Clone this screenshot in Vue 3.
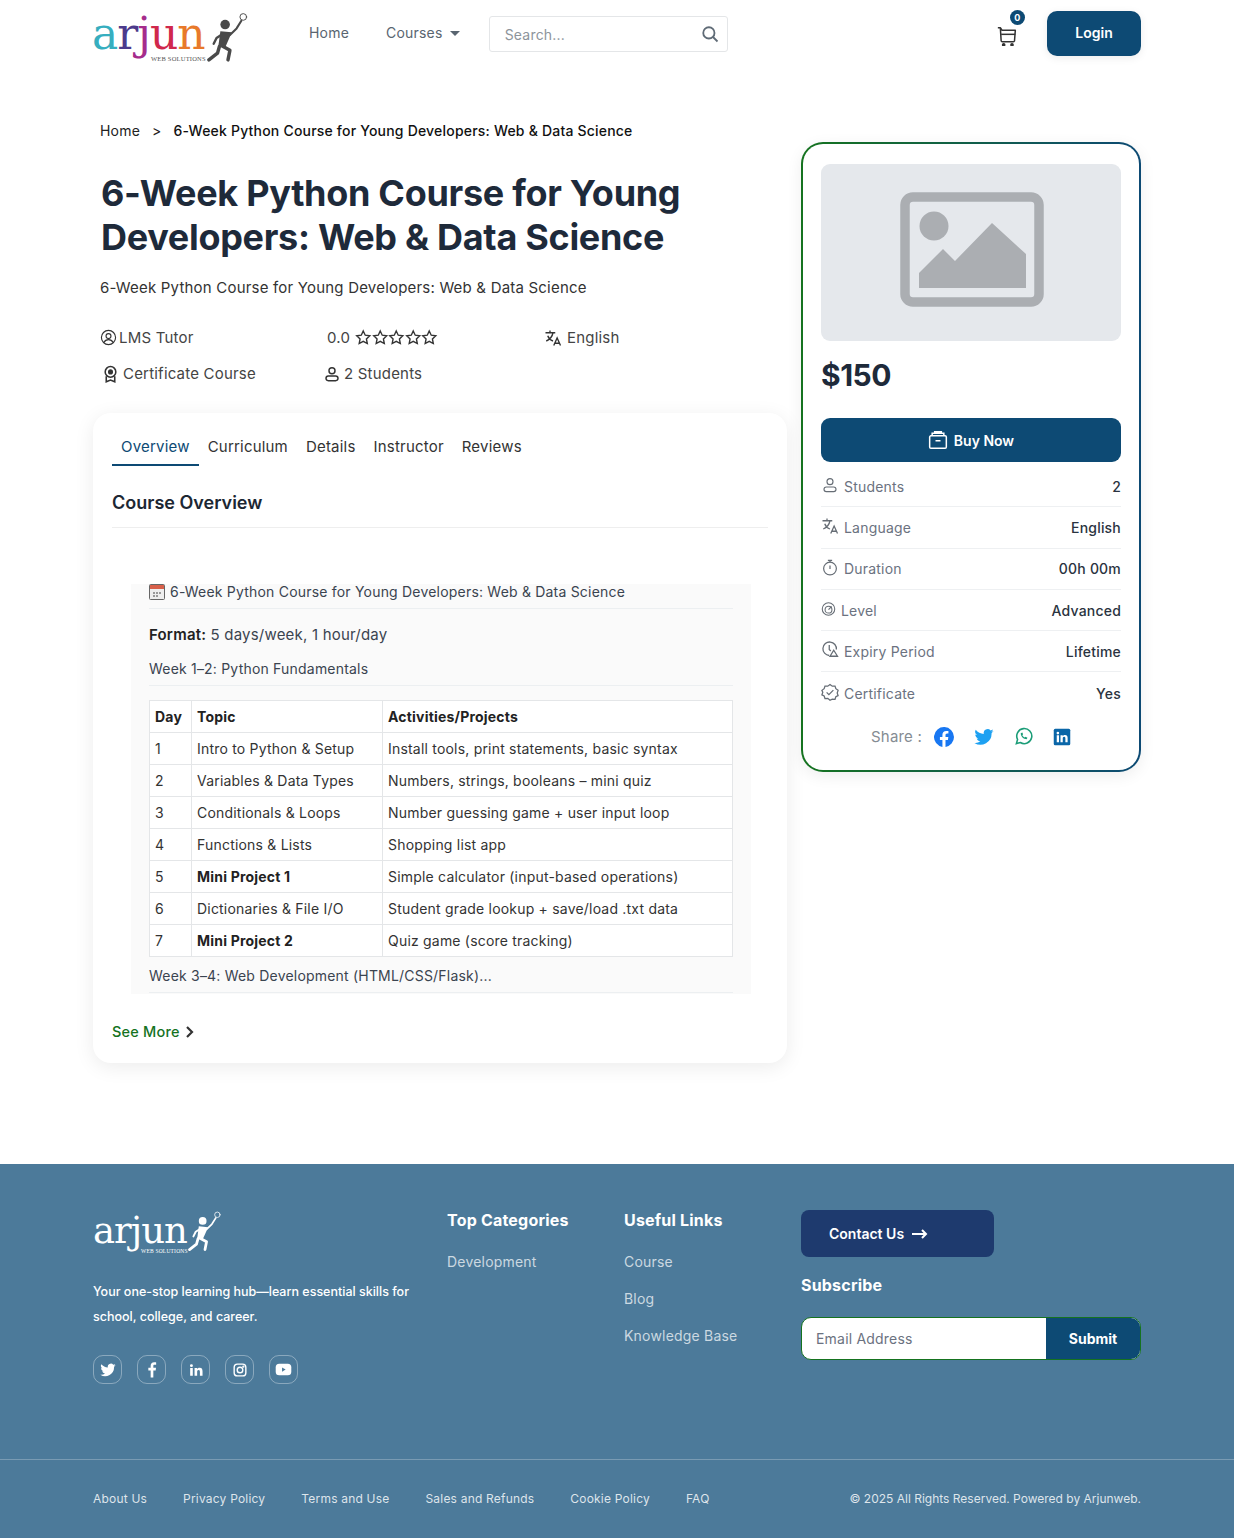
<template>
  <div class="page">
    <header class="topbar">
      <div class="logo">
        <span class="logo-word"><i class="c1">a</i><i class="c2">r</i><i class="c3">j</i><i class="c4">u</i><i class="c5">n</i></span>
        <span class="logo-sub">WEB SOLUTIONS</span>
        <svg class="logo-man" viewBox="0 0 44 52"><g fill="none" stroke="#4a4a4a" stroke-linecap="round" stroke-linejoin="round"><circle cx="38" cy="5" r="3.5" stroke-width="1"/><path d="M36 9 31 17 24 24" stroke-width="2.2"/><path d="M16 23 10 27 7 33" stroke-width="2.5"/><path d="M15 35 24 40 22 50" stroke-width="3.6"/><path d="M13 36 11 43 2 50" stroke-width="3.6"/></g><circle cx="19" cy="13" r="5" fill="#4a4a4a"/><path d="M14 20 26 21 19 37 12 35Z" fill="#4a4a4a"/></svg>
      </div>
      <nav class="nav">
        <a>Home</a>
        <a>Courses <span class="caret"></span></a>
      </nav>
      <div class="search">
        <span>Search...</span>
        <svg width="18" height="18" viewBox="0 0 24 24" fill="none" stroke="#5f6b76" stroke-width="2.4"><circle cx="10.5" cy="10.5" r="7.5"/><path d="M16 16l6 6"/></svg>
      </div>
      <div class="top-right">
        <div class="cart">
          <svg width="20" height="20" viewBox="0 0 24 24" fill="none" stroke="#333" stroke-width="1.8" stroke-linejoin="round"><path d="M1 2h3l2 3h16l-1 13a2 2 0 0 1-2 1H7a2 2 0 0 1-2-1L4 2"/><path d="M5 10h17"/><circle cx="8" cy="22.500" r="1.300" fill="#333"/><circle cx="18" cy="22.500" r="1.300" fill="#333"/></svg>
          <span class="badge">0</span>
        </div>
        <button class="login">Login</button>
      </div>
    </header>

    <main class="main">
      <div class="left">
        <div class="crumb"><span>Home</span><span class="sep">&gt;</span><b>6-Week Python Course for Young Developers: Web &amp; Data Science</b></div>
        <h1>6-Week Python Course for Young Developers: Web &amp; Data Science</h1>
        <p class="sub">6-Week Python Course for Young Developers: Web &amp; Data Science</p>
        <div class="meta">
          <div class="m"><svg width="17" height="17" viewBox="0 0 24 24" fill="none" stroke="#333" stroke-width="1.6"><circle cx="12" cy="12" r="10"/><circle cx="12" cy="10" r="3.5"/><path d="M5.5 19c1.5-3 3.5-4 6.5-4s5 1 6.5 4"/></svg>LMS Tutor</div>
          <div class="m rate">0.0
            <span class="stars"><svg v-for="n in 5" :key="n" width="16.500" height="17" viewBox="0 0 24 24" fill="none" stroke="#333" stroke-width="2"><path d="M12 2.500l2.900 6.200 6.600.8-4.900 4.600 1.300 6.700L12 17.500l-5.900 3.300 1.300-6.700L2.500 9.500l6.600-.8z"/></svg></span>
          </div>
          <div class="m lang"><svg width="18" height="18" viewBox="0 0 24 24" fill="none" stroke="#333" stroke-width="1.8"><path d="M2 5h13M8 2v3M12 5c-1 5-4 9-9 11M5 9c1 3 4 6 7 7"/><path d="M13 22l4.500-10L22 22M14.500 19h6"/></svg>English</div>
          <div class="m cert"><svg width="17" height="18" viewBox="0 0 24 24" fill="none" stroke="#333" stroke-width="2.200"><circle cx="12" cy="9" r="7.500"/><circle cx="12" cy="9" r="2.500" fill="#333"/><path d="M6 15v8l6-2.500L18 23v-8"/></svg>Certificate Course</div>
          <div class="m stu"><svg width="16" height="16" viewBox="0 0 24 24" fill="none" stroke="#333" stroke-width="2.200"><circle cx="12" cy="7" r="4.500"/><rect x="3" y="15" width="18" height="7" rx="3.500"/></svg>2 Students</div>
        </div>

        <section class="card">
          <div class="tabs">
            <a v-for="(t, i) in tabs" :key="t" :class="{ on: i === 0 }">{{ t }}</a>
          </div>
          <h2 class="ov">Course Overview</h2>
          <div class="rich">
            <div class="hline first"><svg class="cal" width="16" height="16" viewBox="0 0 16 16"><rect x=".5" y=".5" width="15" height="15" rx="1" fill="#eee" stroke="#666"/><rect x="1" y="1" width="14" height="4" fill="#d8604a"/><path d="M4 8h2v2H4zM7 8h2v2H7zM10 8h2v2h-2zM4 11h2v2H4zM7 11h2v2H7z" fill="#999"/></svg> 6-Week Python Course for Young Developers: Web &amp; Data Science</div>
            <p class="format"><b>Format:</b> 5 days/week, 1 hour/day</p>
            <div class="hline w">Week 1–2: Python Fundamentals</div>
            <table>
              <thead><tr><th class="c-day">Day</th><th class="c-topic">Topic</th><th>Activities/Projects</th></tr></thead>
              <tbody>
                <tr v-for="r in rows" :key="r[0]">
                  <td>{{ r[0] }}</td>
                  <td><b v-if="r[3]">{{ r[1] }}</b><template v-else>{{ r[1] }}</template></td>
                  <td>{{ r[2] }}</td>
                </tr>
              </tbody>
            </table>
            <div class="hline last">Week 3–4: Web Development (HTML/CSS/Flask)...</div>
          </div>
          <a class="more">See More <svg width="9" height="12" viewBox="0 0 9 12" fill="none" stroke="#333" stroke-width="2.200"><path d="M2 1l5 5-5 5"/></svg></a>
        </section>
      </div>

      <aside class="side">
        <div class="thumb">
          <svg width="146" height="116" viewBox="0 0 146 116"><rect x="5" y="5" width="134" height="105" rx="8" fill="none" stroke="#abaeb2" stroke-width="9.500"/><circle cx="34" cy="34" r="14.500" fill="#abaeb2"/><path d="M19 96V81l24-24 12 12 37-38 34 31v34z" fill="#abaeb2"/></svg>
        </div>
        <div class="price">$150</div>
        <button class="buy">
          <svg width="20" height="20" viewBox="0 0 24 24" fill="none" stroke="#fff" stroke-width="1.800"><rect x="2" y="7" width="20" height="15" rx="1.500"/><path d="M5 7V4h14v3M8 4V2h8v2M9 13h6"/></svg>
          Buy Now
        </button>
        <div class="facts">
          <div v-for="f in facts" :key="f.label" class="fact">
            <span class="fl">
              <svg :class="f.cls" :width="f.size" :height="f.size" viewBox="0 0 24 24" fill="none" stroke="#666d75" stroke-width="1.700" v-html="f.icon"></svg>
              {{ f.label }}
            </span>
            <span class="fv">{{ f.value }}</span>
          </div>
        </div>
        <div class="share">
          <span>Share :</span>
          <svg width="20" height="20" viewBox="0 0 24 24"><path fill="#1877f2" d="M24 12a12 12 0 1 0-13.900 11.900v-8.400h-3V12h3V9.400c0-3 1.800-4.700 4.500-4.700 1.300 0 2.700.2 2.700.2v3h-1.500c-1.500 0-2 .9-2 1.900V12h3.400l-.5 3.500h-2.900v8.400A12 12 0 0 0 24 12z"/></svg>
          <svg width="20" height="20" viewBox="0 0 24 24"><path fill="#1da1f2" :d="twitter"/></svg>
          <svg width="19" height="19" viewBox="0 0 24 24" fill="none" stroke="#1c9d78" stroke-width="2"><path d="M3 21l1.500-5.200A9.500 9.500 0 1 1 8 19.600z"/><path d="M8.500 8c0 4 3.500 7.500 7.500 7.500l1-2-2.500-1.200-1 1c-1.500-.7-2.500-1.700-3-3l1-1L10.500 7z" fill="#1c9d78" stroke="none"/></svg>
          <svg width="18" height="18" viewBox="0 0 24 24"><rect x="1" y="1" width="22" height="22" rx="2" fill="#0a66a8"/><path fill="#fff" d="M5 9.500h3V19H5zM6.500 5a1.700 1.700 0 1 1 0 3.500 1.700 1.700 0 0 1 0-3.500zM10 9.500h3v1.300c.5-.9 1.600-1.600 3-1.600 3 0 3.500 2 3.500 4.600V19h-3v-4.600c0-1.200 0-2.600-1.600-2.600S13 13 13 14.300V19h-3z"/></svg>
        </div>
      </aside>
    </main>

    <footer class="footer">
      <div class="f-top">
        <div class="f-about">
          <div class="logo f-logo">
            <span class="logo-word">arjun</span>
            <span class="logo-sub">WEB SOLUTIONS</span>
            <svg class="logo-man" viewBox="0 0 44 52"><g fill="none" stroke="#fff" stroke-linecap="round" stroke-linejoin="round"><circle cx="38" cy="5" r="3.500" stroke-width="1"/><path d="M36 9 31 17 24 24" stroke-width="2.200"/><path d="M16 23 10 27 7 33" stroke-width="2.500"/><path d="M15 35 24 40 22 50" stroke-width="3.600"/><path d="M13 36 11 43 2 50" stroke-width="3.600"/></g><circle cx="19" cy="13" r="5" fill="#fff"/><path d="M14 20 26 21 19 37 12 35Z" fill="#fff"/></svg>
          </div>
          <p class="f-text">Your one-stop learning hub—learn essential skills for school, college, and career.</p>
          <div class="socials">
            <a><svg width="16" height="16" viewBox="0 0 24 24"><path fill="#fff" :d="twitter"/></svg></a>
            <a><svg width="16" height="17" viewBox="0 0 24 24"><path fill="#fff" d="M14 24V13.500h3.500l.5-4h-4V7c0-1.200.4-2 2-2h2.200V1.400C17.800 1.300 16.500 1.200 15.200 1.200 12 1.200 10 3.100 10 6.600v2.900H6.500v4H10V24z"/></svg></a>
            <a><svg width="14" height="14" viewBox="0 0 24 24"><path fill="#fff" d="M2 8.500h4.500V22H2zM4.200 2a2.500 2.500 0 1 1 0 5 2.500 2.500 0 0 1 0-5zM9.500 8.500h4.300v1.900c.7-1.200 2.200-2.300 4.300-2.300 4.300 0 5.100 2.800 5.100 6.500V22h-4.500v-6.500c0-1.700 0-3.700-2.300-3.700s-2.400 1.800-2.400 3.600V22H9.500z"/></svg></a>
            <a><svg width="14" height="14" viewBox="0 0 24 24" fill="none" stroke="#fff" stroke-width="2.400"><rect x="2" y="2" width="20" height="20" rx="5.500"/><circle cx="12" cy="12" r="4.800"/><circle cx="17.800" cy="6.200" r=".8" fill="#fff"/></svg></a>
            <a><svg width="17" height="17" viewBox="0 0 24 24"><rect x="1" y="4" width="22" height="16" rx="5" fill="#fff"/><path d="M10 9l5 3-5 3z" fill="#4c7a9a"/></svg></a>
          </div>
        </div>
        <div class="f-col cat">
          <h4>Top Categories</h4>
          <a>Development</a>
        </div>
        <div class="f-col links">
          <h4>Useful Links</h4>
          <a>Course</a>
          <a>Blog</a>
          <a>Knowledge Base</a>
        </div>
        <div class="f-sub">
          <button class="contact">Contact Us
            <svg width="16" height="12" viewBox="0 0 16 12" fill="none" stroke="#fff" stroke-width="2"><path d="M0 6h14M10 2l4 4-4 4"/></svg>
          </button>
          <h4>Subscribe</h4>
          <div class="sub-form">
            <span>Email Address</span>
            <button>Submit</button>
          </div>
        </div>
      </div>
      <div class="f-bottom">
        <div class="f-inner">
          <div class="f-links"><a v-for="l in bottomLinks" :key="l">{{ l }}</a></div>
          <span class="copy">© 2025 All Rights Reserved. Powered by Arjunweb.</span>
        </div>
      </div>
    </footer>
  </div>
</template>

<script setup>
const tabs = ['Overview', 'Curriculum', 'Details', 'Instructor', 'Reviews']

const rows = [
  ['1', 'Intro to Python & Setup', 'Install tools, print statements, basic syntax'],
  ['2', 'Variables & Data Types', 'Numbers, strings, booleans – mini quiz'],
  ['3', 'Conditionals & Loops', 'Number guessing game + user input loop'],
  ['4', 'Functions & Lists', 'Shopping list app'],
  ['5', 'Mini Project 1', 'Simple calculator (input-based operations)', true],
  ['6', 'Dictionaries & File I/O', 'Student grade lookup + save/load .txt data'],
  ['7', 'Mini Project 2', 'Quiz game (score tracking)', true]
]

const facts = [
  { label: 'Students', value: '2', size: 16, cls: 'fi', icon: '<circle cx="12" cy="7" r="4.500"/><rect x="3" y="15" width="18" height="7" rx="3.500"/>' },
  { label: 'Language', value: 'English', size: 18, cls: 'fi', icon: '<path d="M2 5h13M8 2v3M12 5c-1 5-4 9-9 11M5 9c1 3 4 6 7 7"/><path d="M13 22l4.500-10L22 22M14.500 19h6"/>' },
  { label: 'Duration', value: '00h 00m', size: 17, cls: 'fi', icon: '<circle cx="12" cy="13.500" r="9"/><path d="M9 2h6M12 2v3M12 9v5"/>' },
  { label: 'Level', value: 'Advanced', size: 16, cls: 'fi tight', icon: '<circle cx="12" cy="12" r="10"/><circle cx="12" cy="13" r="5.500"/><path d="M12 13l5-5"/>' },
  { label: 'Expiry Period', value: 'Lifetime', size: 19, cls: 'fi', icon: '<path d="M11 20a9 9 0 1 1 9.500-8"/><path d="M11 6v6l2 2"/><path d="M17 13l5 8H12z"/>' },
  { label: 'Certificate', value: 'Yes', size: 18, cls: 'fi', icon: '<path d="M12 2l3 2.200 3.700-.1 1.100 3.500 3 2.200-1.200 3.500 1.200 3.500-3 1.600-1.100 3.300-3.700-.2L12 23l-3-2.500-3.700.2-1.100-3.300-3-1.600 1.200-3.500L1.200 9.800l3-2.200 1.100-3.500 3.700.1z"/><path d="M7.500 12.500l3 3 6-6"/>' }
]

const bottomLinks = ['About Us', 'Privacy Policy', 'Terms and Use', 'Sales and Refunds', 'Cookie Policy', 'FAQ']

const twitter = 'M23.500 4.900c-.8.400-1.800.600-2.700.700 1-.600 1.700-1.500 2.100-2.600-.9.500-1.900.900-3 1.100a4.700 4.700 0 0 0-8.100 4.300C7.900 8.200 4.400 6.300 2.100 3.400a4.700 4.700 0 0 0 1.500 6.300c-.8 0-1.500-.2-2.100-.6 0 2.300 1.600 4.200 3.800 4.700-.7.200-1.400.2-2.100.1.600 1.900 2.300 3.200 4.400 3.300A9.500 9.500 0 0 1 .5 19.100 13.400 13.400 0 0 0 21.100 7.200c.9-.7 1.800-1.400 2.400-2.300z'
</script>

<style scoped>
.page {
  width: 1234px;
  font-family: Inter, "Open Sans", sans-serif;
  letter-spacing: 0.2px;
  color: #222;
  background: #fff;
}

.topbar {
  height: 70px;
  padding: 0 93px;
  display: flex;
  align-items: flex-start;
  position: relative;
}

.logo {
  position: relative;
  width: 156px;
  height: 62px;
  margin-top: 8px;
  flex: none;
}
.logo-word {
  position: absolute;
  left: -1px;
  top: 3px;
  font-family: "DejaVu Serif", serif;
  font-size: 44px;
  letter-spacing: -1px;
  line-height: 46px;
}
.logo-word i { font-style: normal; }
.c1 { color: #36aebf; }
.c2 { color: #4c3a8c; }
.c3 { color: #a52c8c; }
.c4 { color: #d0284c; }
.c5 { color: #e8792a; }
.logo-sub {
  position: absolute;
  left: 58px;
  top: 47px;
  font-family: "Liberation Serif", serif;
  font-size: 6.500px;
  color: #555;
  white-space: nowrap;
}
.logo-man {
  position: absolute;
  left: 114px;
  top: 3px;
  width: 42px;
  height: 52px;
}

.nav {
  display: flex;
  gap: 37px;
  margin-left: 60px;
  margin-top: 25px;
  font-size: 14px;
  color: #596570;
  line-height: 16px;
}
.caret {
  display: inline-block;
  margin-left: 3px;
  vertical-align: 2px;
  border: 5px solid transparent;
  border-top: 5px solid #596570;
  border-bottom: 0;
}
.search {
  width: 239px;
  height: 36px;
  box-sizing: border-box;
  margin-left: 29px;
  margin-top: 16px;
  padding: 0 8px 0 15px;
  border: 1px solid #e4e6e8;
  border-radius: 3px;
  display: flex;
  align-items: center;
  justify-content: space-between;
  font-size: 14px;
  color: #8d949b;
}
.top-right {
  margin-left: auto;
  margin-top: 11px;
  display: flex;
  gap: 28px;
}
.cart {
  position: relative;
  margin-top: 15px;
  width: 22px;
}
.badge {
  position: absolute;
  top: -16px;
  left: 13px;
  width: 15px;
  height: 15px;
  border-radius: 50%;
  background: #0d4a74;
  color: #fff;
  font-size: 9px;
  font-weight: 700;
  text-align: center;
  line-height: 15px;
}
.login {
  width: 94px;
  height: 45px;
  padding-bottom: 3px;
  border: 0;
  border-radius: 10px;
  background: #0d4a74;
  color: #fff;
  font: 600 14px Inter, sans-serif;
  box-shadow: 0 2px 8px rgba(0, 0, 0, 0.08);
}

.main {
  padding: 0 93px;
  display: flex;
  gap: 14px;
  align-items: flex-start;
}
.left { width: 694px; flex: none; padding-top: 52px; }

.crumb {
  padding-left: 7px;
  font-size: 14px;
  line-height: 18px;
  display: flex;
  gap: 12px;
}
.crumb b { font-weight: 500; color: #111; }

h1 {
  margin: 31px 0 0 8px;
  font-size: 36px;
  line-height: 44px;
  font-weight: 700;
  color: #1e2a3a;
  letter-spacing: -0.3px;
  width: 620px;
}
.sub {
  margin: 19px 0 0 7px;
  font-size: 15px;
  line-height: 20px;
  color: #333;
}
.meta {
  margin: 29px 0 0 7px;
  display: grid;
  grid-template-columns: 224px 220px 1fr;
  row-gap: 15px;
  font-size: 15px;
  color: #444;
}
.m {
  display: flex;
  align-items: center;
  gap: 2px;
  height: 21px;
}
.rate { gap: 5px; margin-left: 3px; }
.stars { display: flex; gap: 0; }
.lang { gap: 5px; }
.cert { gap: 4px; margin-left: 2px; }
.stu { gap: 4px; }

.card {
  margin-top: 29px;
  height: 650px;
  box-sizing: border-box;
  background: #fff;
  border-radius: 18px;
  padding: 18px 18px 0 19px;
  box-shadow: 0 4px 20px rgba(0, 0, 0, 0.08);
}
.tabs {
  display: flex;
  font-size: 15px;
  color: #333;
}
.tabs a { padding: 6px 9px 8px; line-height: 19px; }
.tabs a.on {
  color: #0d4a74;
  border-bottom: 2px solid #0d4a74;
}
.ov {
  margin: 26px 0 0;
  padding-bottom: 13px;
  font-size: 18px;
  line-height: 22px;
  font-weight: 600;
  letter-spacing: 0;
  color: #1c2733;
  border-bottom: 1px solid #eee;
  width: 656px;
}
.rich {
  width: 620px;
  box-sizing: border-box;
  margin: 56px 0 0 19px;
  padding: 0 18px;
  height: 410px;
  background: #fafafa;
  color: #3a4450;
  overflow: hidden;
}
.hline {
  font-size: 14px;
  line-height: 18px;
  border-bottom: 1px solid #eceff1;
}
.first { margin-top: -1px; padding-bottom: 7px; display: flex; align-items: center; gap: 5px; white-space: nowrap; }
.cal { flex: none; }
.format {
  margin: 16px 0 0;
  font-size: 15px;
  line-height: 20px;
}
.format b { color: #222; font-weight: 600; }
.w { margin-top: 15px; padding-bottom: 7px; }
table {
  margin-top: 14px;
  width: 584px;
  border-collapse: collapse;
  background: #fff;
  font-size: 14px;
  line-height: 18px;
  table-layout: fixed;
  color: #333;
}
th, td {
  border: 1px solid #e4e6e8;
  padding: 0 4px 0 5px;
  height: 32px;
  box-sizing: border-box;
  text-align: left;
  white-space: nowrap;
}
th, td b { font-weight: 700; color: #222; }
.c-day { width: 42px; }
.c-topic { width: 191px; }
.last { margin-top: 10px; padding-bottom: 7px; }
.more {
  display: inline-flex;
  align-items: center;
  gap: 5px;
  margin-top: 29px;
  font-size: 14.500px;
  font-weight: 500;
  line-height: 18px;
  color: #15731f;
}

.side {
  margin-top: 72px;
  width: 340px;
  height: 630px;
  box-sizing: border-box;
  padding: 20px 18px 0;
  border: 2px solid transparent;
  border-radius: 22px;
  background: linear-gradient(#fff, #fff) padding-box, linear-gradient(90deg, #15731f, #0d4a74) border-box;
  box-shadow: 0 4px 16px rgba(0, 0, 0, 0.07);
}
.thumb {
  height: 177px;
  background: #e5e8ec;
  border-radius: 9px;
  display: flex;
  align-items: center;
  justify-content: center;
}
.thumb svg { margin: -6px 0 0 4px; }
.price {
  margin-top: 15px;
  font-size: 30px;
  line-height: 38px;
  font-weight: 700;
  letter-spacing: -0.5px;
  color: #1e2a3a;
}
.buy {
  margin-top: 24px;
  width: 100%;
  height: 44px;
  border: 0;
  border-radius: 9px;
  background: #0d4a74;
  color: #fff;
  font: 600 14px Inter, sans-serif;
  display: flex;
  align-items: center;
  justify-content: center;
  gap: 6px;
}
.facts { margin-top: 4px; }
.fact {
  height: 41.300px;
  box-sizing: border-box;
  display: flex;
  align-items: center;
  justify-content: space-between;
  border-bottom: 1px solid #eef0f2;
  font-size: 14px;
  color: #6b7280;
}
.fact:last-child { border-bottom: 0; }
.fl { display: flex; align-items: center; gap: 5px; }
.fl svg { margin-top: -3px; width: 18px; }
.fl svg.tight { width: 15px; }
.fv { font-weight: 500; color: #2a3340; }
.share {
  margin-top: 13px;
  display: flex;
  align-items: center;
  justify-content: center;
  gap: 20px;
  font-size: 15px;
  color: #858c93;
}
.share span { margin-right: -8px; }

.footer {
  margin-top: 101px;
  background: #4c7a9a;
  color: #fff;
  height: 374px;
}
.f-top {
  height: 295px;
  box-sizing: border-box;
  padding: 46px 93px 0;
  display: flex;
}
.f-about { width: 354px; flex: none; }
.f-logo { margin-top: 0; height: 62px; width: 130px; }
.f-logo .logo-word { color: #fff; top: -2px; font-size: 37px; left: 0; }
.f-logo .logo-sub { color: #fff; left: 48px; top: 38px; font-size: 5.500px; }
.f-logo .logo-man { left: 95px; top: -1px; width: 34px; height: 44px; }
.f-text {
  width: 322px;
  margin: 7px 0 0;
  font-size: 12.500px;
  line-height: 25px;
  font-weight: 500;
  letter-spacing: 0;
}
.socials { margin-top: 26px; display: flex; gap: 15px; }
.socials a {
  width: 29px;
  height: 29px;
  box-sizing: border-box;
  border: 1px solid rgba(255, 255, 255, 0.35);
  border-radius: 10px;
  display: flex;
  align-items: center;
  justify-content: center;
}
.f-col { width: 177px; flex: none; }
.f-col h4, .f-sub h4 {
  margin: 0;
  font-size: 16px;
  line-height: 20px;
  font-weight: 700;
}
.f-col a {
  display: block;
  margin-top: 17px;
  font-size: 14px;
  line-height: 20px;
  color: rgba(255, 255, 255, 0.72);
}
.f-col h4 + a { margin-top: 22px; }
.f-sub { flex: 1; }
.contact {
  width: 193px;
  height: 47px;
  padding-left: 28px;
  border: 0;
  border-radius: 8px;
  background: #1e3a6e;
  color: #fff;
  font: 600 14px Inter, sans-serif;
  display: flex;
  align-items: center;
  gap: 8px;
}
.f-sub h4 { margin-top: 18px; }
.sub-form {
  margin-top: 22px;
  height: 43px;
  box-sizing: border-box;
  display: flex;
  align-items: stretch;
  border: 1px solid #15731f;
  border-radius: 10px;
  background: #fff;
  overflow: hidden;
}
.sub-form span {
  flex: 1;
  padding-left: 14px;
  font-size: 14px;
  line-height: 41px;
  color: #6b7280;
}
.sub-form button {
  width: 94px;
  border: 0;
  background: #0d4a74;
  color: #fff;
  font: 700 14px Inter, sans-serif;
}
.f-bottom { border-top: 1px solid rgba(255, 255, 255, 0.25); }
.f-inner {
  padding: 30px 93px 0;
  display: flex;
  justify-content: space-between;
  font-size: 12px;
  line-height: 18px;
  color: rgba(255, 255, 255, 0.82);
}
.f-links { display: flex; gap: 36px; }
.copy { letter-spacing: 0; }
</style>

<style>
html, body { background: #fff; }
</style>
